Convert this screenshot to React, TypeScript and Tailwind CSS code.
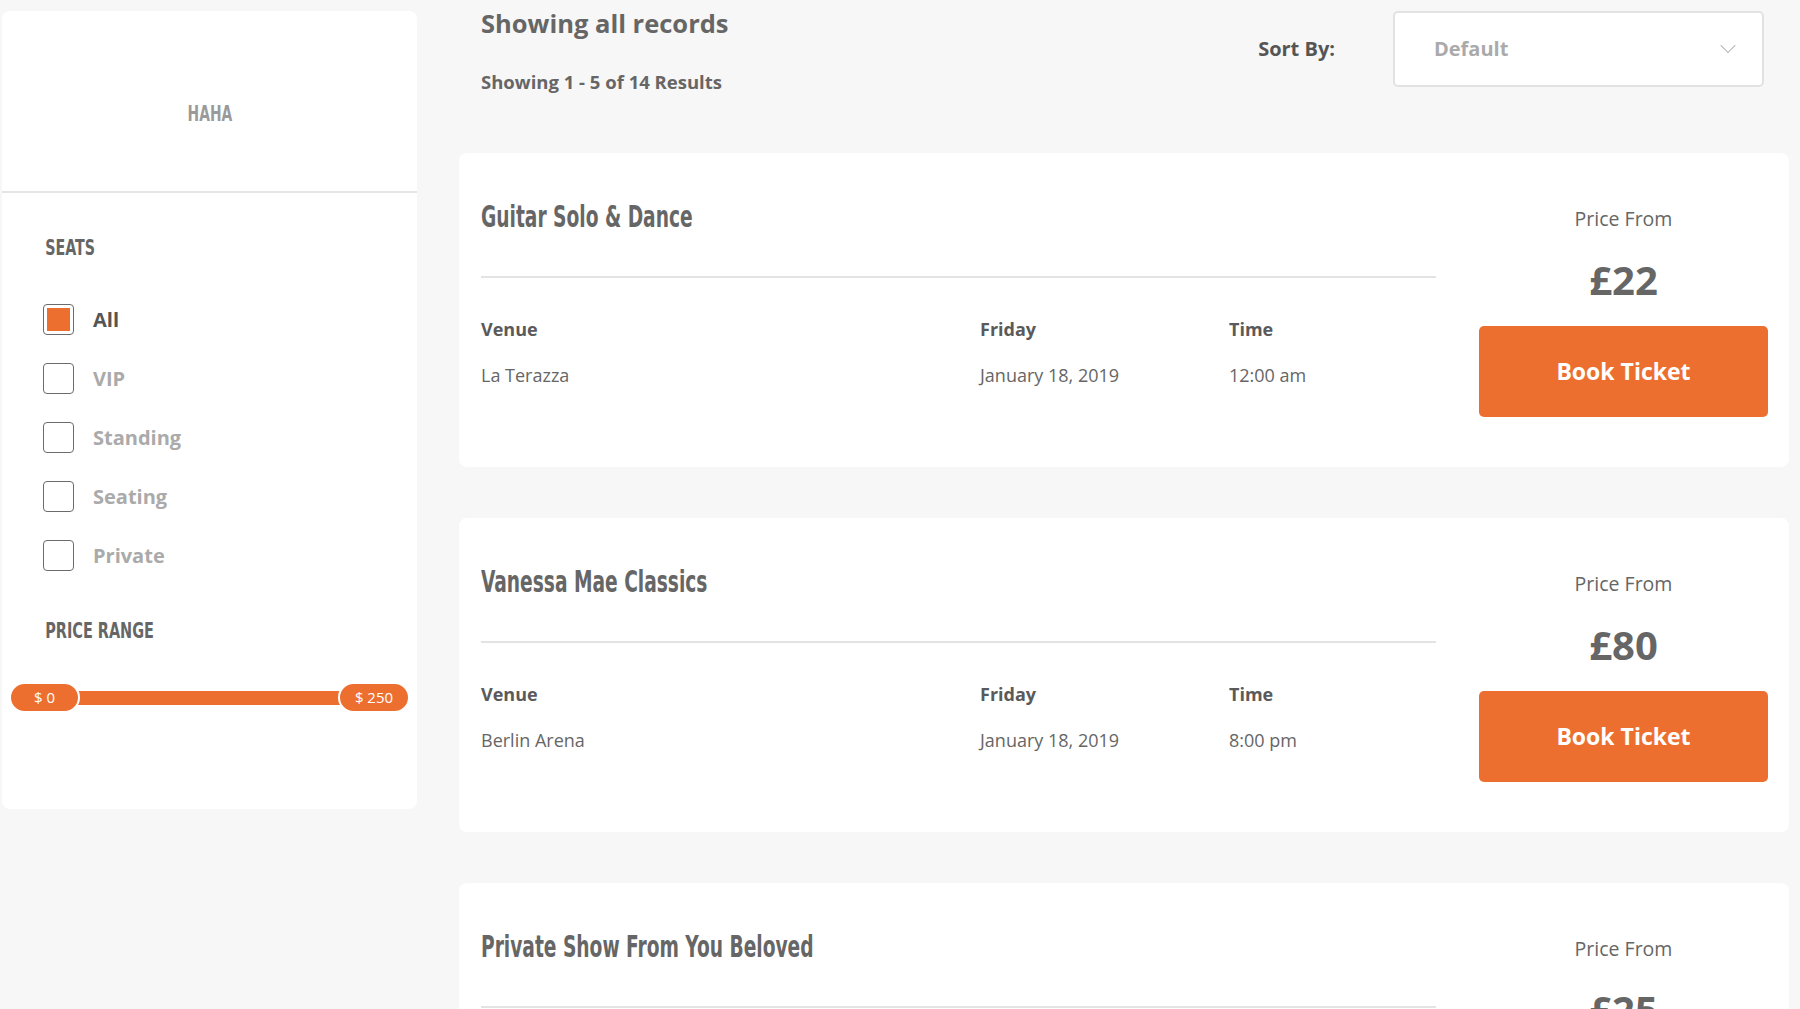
import { ChevronDown } from "lucide-react";

const body = "font-['Open_Sans','Liberation_Sans',sans-serif]";
const narrow = "font-['DejaVu_Sans_Condensed','Liberation_Sans',sans-serif]";

const seats = [
  { label: "All", checked: true },
  { label: "VIP", checked: false },
  { label: "Standing", checked: false },
  { label: "Seating", checked: false },
  { label: "Private", checked: false },
];

const events = [
  { title: "Guitar Solo & Dance", venue: "La Terazza", day: "Friday", date: "January 18, 2019", time: "12:00 am", price: "£22" },
  { title: "Vanessa Mae Classics", venue: "Berlin Arena", day: "Friday", date: "January 18, 2019", time: "8:00 pm", price: "£80" },
  { title: "Private Show From You Beloved", venue: "La Terazza", day: "Saturday", date: "January 19, 2019", time: "9:00 pm", price: "£25" },
];

const Sidebar = () => {
  return (
    <aside className="w-[415px] shrink-0 mt-[11px] bg-white rounded-lg self-start">
      <div className="h-[182px] flex items-center justify-center border-b-2 border-[#e6e6e6]">
        <span className={`${narrow} inline-block scale-x-[0.7] text-[22px] font-semibold text-[#9a9a9a] pt-[25px]`}>HAHA</span>
      </div>
      <div className="pl-[41px] pr-2 pt-[43px] pb-[95px]">
        <h3 className={`${narrow} origin-left scale-x-[0.72] font-bold text-[22px] leading-6 text-[#666] pl-[3px]`}>SEATS</h3>
        <div className="mt-[44px] flex flex-col gap-[28px]">
          {seats.map((s) => (
            <label key={s.label} className="flex items-center gap-[19px] h-[31px]">
              <span className="w-[31px] h-[31px] rounded-[4px] border-[1.5px] border-[#6b6b6b] flex items-center justify-center">
                {s.checked && <span className="w-[23px] h-[23px] bg-[#ed6f2f]" />}
              </span>
              <span
                className={`${body} font-bold text-[20px] ${s.checked ? "text-[#555]" : "text-[#aaa]"}`}
              >
                {s.label}
              </span>
            </label>
          ))}
        </div>
        <h3 className={`${narrow} origin-left scale-x-[0.73] font-bold text-[22px] leading-6 text-[#666] pl-[3px] mt-[48px]`}>
          PRICE RANGE
        </h3>
      </div>
      <div className="-mt-[56px] mb-[96px] mx-[7px] flex items-center">
        <div className={`${body} relative z-10 w-[71px] h-[31px] rounded-full bg-[#ed6f2f] border-2 border-white flex items-center justify-center text-white text-[15px]`}>
          $ 0
        </div>
        <div className="flex-1 h-[14px] bg-[#ed6f2f] -mx-[3px]" />
        <div className={`${body} relative z-10 w-[72px] h-[31px] rounded-full bg-[#ed6f2f] border-2 border-white flex items-center justify-center text-white text-[15px]`}>
          $ 250
        </div>
      </div>
    </aside>
  );
};

const EventCard = ({ e }: { e: (typeof events)[number] }) => {
  return (
    <div className="bg-white rounded-lg h-[314px] pl-[22px] pr-[21px] flex">
      <div className="w-[955px] pt-[46px]">
        <h2 className={`${narrow} origin-left scale-x-[0.69] whitespace-nowrap font-bold text-[30px] leading-9 text-[#666]`}>{e.title}</h2>
        <div className="mt-[41px] h-[2px] bg-[#e3e3e3]" />
        <div className={`${body} mt-[39px] flex text-[18px] text-[#666]`}>
          <div className="w-[499px]">
            <div className="font-bold leading-6 text-[#5a5a5a]">Venue</div>
            <div className="leading-6 mt-[22px]">{e.venue}</div>
          </div>
          <div className="w-[249px]">
            <div className="font-bold leading-6 text-[#5a5a5a]">{e.day}</div>
            <div className="leading-6 mt-[22px]">{e.date}</div>
          </div>
          <div>
            <div className="font-bold leading-6 text-[#5a5a5a]">Time</div>
            <div className="leading-6 mt-[22px]">{e.time}</div>
          </div>
        </div>
      </div>
      <div className={`${body} ml-auto w-[289px] pt-[53px] flex flex-col items-center`}>
        <div className="text-[19.5px] leading-[26px] text-[#666]">Price From</div>
        <div className="mt-[24px] text-[40px] leading-[48px] font-bold text-[#666]">{e.price}</div>
        <button className="mt-[22px] w-full h-[91px] rounded-[5px] bg-[#ed6f2f] text-white text-[23px] font-bold">
          Book Ticket
        </button>
      </div>
    </div>
  );
};

const App = () => {
  return (
    <div className={`${body} min-h-screen bg-[#f7f7f7] flex gap-[42px] pl-[2px]`}>
      <Sidebar />
      <main className="w-[1330px]">
        <div className="h-[153px] flex justify-between">
          <div className="pl-[22px]">
            <h1 className="mt-[7px] text-[25.5px] leading-8 font-bold text-[#666]">Showing all records</h1>
            <p className="mt-[30px] text-[18.5px] leading-[26px] font-bold text-[#666]">
              Showing 1 - 5 of 14 Results
            </p>
          </div>
          <div className="flex items-start gap-[58px] pr-[25px] pt-[11px]">
            <span className="mt-[24px] text-[20px] leading-7 font-bold text-[#555]">Sort By:</span>
            <div className="w-[371px] h-[76px] bg-white border-2 border-[#e2e2e2] rounded-[5px] flex items-center pl-[39px] pr-[20px]">
              <span className="text-[20px] font-bold text-[#aaa]">Default</span>
              <ChevronDown className="ml-auto text-[#aaa]" size={28} strokeWidth={0.9} />
            </div>
          </div>
        </div>
        <div className="flex flex-col gap-[51px] pb-10">
          {events.map((e) => (
            <EventCard key={e.title} e={e} />
          ))}
        </div>
      </main>
    </div>
  );
};

export default App;
